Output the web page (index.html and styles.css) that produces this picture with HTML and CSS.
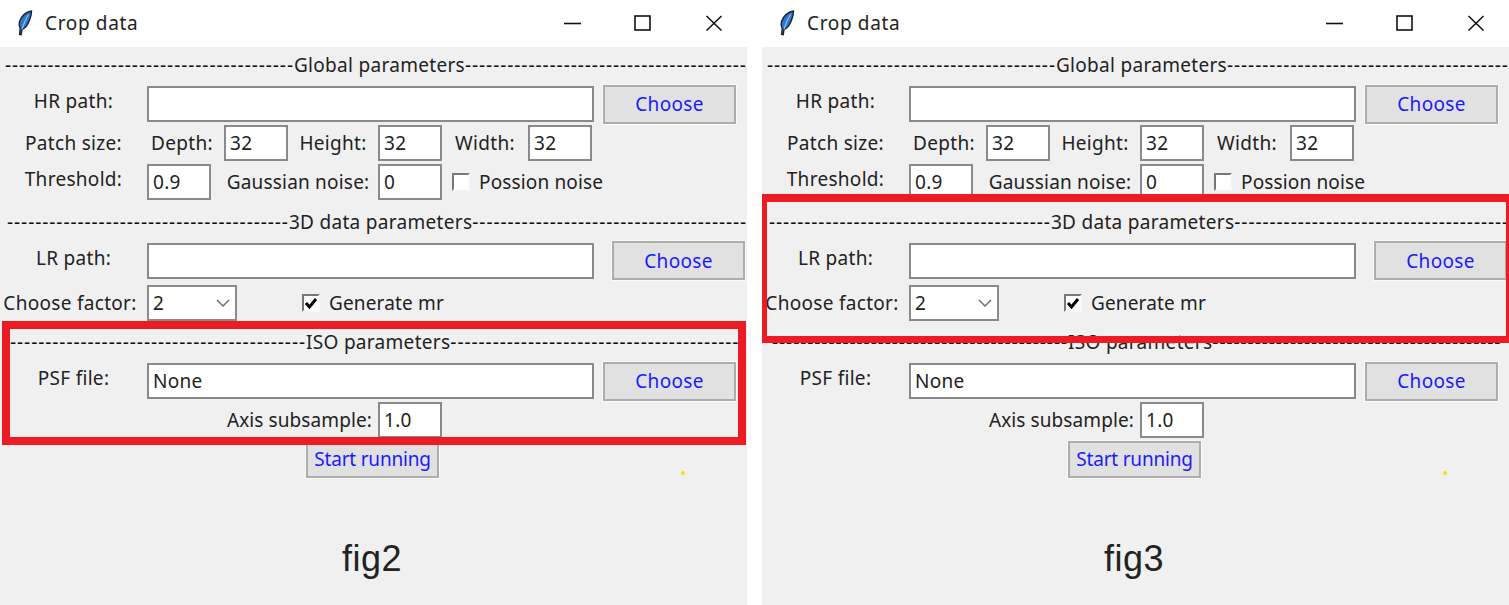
FILE: index.html
```html
<!DOCTYPE html>
<html>
  <head>
    <title>Crop data</title>
    <link rel="stylesheet" href="styles.css">
  </head>
  <body>
    <div class="desktop">
      <!-- fig2 -->
      <div class="window">
        <div class="titlebar">
          <svg class="feather" width="16" height="26" viewBox="0 0 16 26">
            <path d="M14.5 1C9.5 2 4.500 6 2.500 11.500 1.800 14 2.200 16.500 3.200 18.600L2.600 24.500 4.200 24.700 5 19.400C8.500 18 11 14.500 12.600 10 13.800 6.800 14.600 3.600 14.500 1Z" fill="#2f78d0" stroke="#1a2431" stroke-width="1.400"/>
            <path d="M11.500 4.500C9 8.500 7 13 5 19.400" fill="none" stroke="#a9cdf2" stroke-width="1"/>
          </svg>
          <span class="title-text">Crop data</span>
          <svg class="win-controls" width="159" height="16" viewBox="0 0 159 16">
            <path d="M0 8.500H17" stroke="#111" stroke-width="1.600"/>
            <rect x="71" y="1" width="15" height="14" fill="none" stroke="#111" stroke-width="1.600"/>
            <path d="M142.500 1L157.500 15.500M157.500 1L142.500 15.500" stroke="#111" stroke-width="1.500"/>
          </svg>
        </div>
        <div class="content">
          <div class="heading heading-global"><span class="dash">-----------------------------------------</span>Global parameters<span class="dash">----------------------------------------</span></div>

          <div class="row row-path">
            <div class="cell cell-label raised">HR path:</div>
            <div class="entry entry-wide"></div>
            <div class="btn btn-choose">Choose</div>
          </div>

          <div class="row row-patch">
            <div class="cell cell-label">Patch size:</div>
            <div class="cell cell-depth">Depth:</div>
            <div class="entry entry-short">32</div>
            <div class="cell cell-height">Height:</div>
            <div class="entry entry-short">32</div>
            <div class="cell cell-width">Width:</div>
            <div class="entry entry-short">32</div>
          </div>

          <div class="row row-thresh">
            <div class="cell cell-label raised">Threshold:</div>
            <div class="entry entry-short">0.9</div>
            <div class="cell cell-gauss">Gaussian noise:</div>
            <div class="entry entry-short">0</div>
            <div class="check check-possion"></div>
            <div class="check-label">Possion noise</div>
          </div>

          <div class="heading heading-3d"><span class="dash">----------------------------------------</span>3D data parameters<span class="dash">---------------------------------------</span></div>

          <div class="row row-lr">
            <div class="cell cell-label raised">LR path:</div>
            <div class="entry entry-wide"></div>
            <div class="btn btn-choose btn-lr">Choose</div>
          </div>

          <div class="row row-factor">
            <div class="cell cell-label cell-factor">Choose factor:</div>
            <div class="entry combo">2
              <svg class="chevron" width="14" height="8" viewBox="0 0 14 8"><path d="M1 1L7 7L13 1" fill="none" stroke="#707070" stroke-width="1.500"/></svg>
            </div>
            <div class="check check-mr">
              <svg width="14" height="13" viewBox="0 0 14 13"><path d="M2 6L5.500 10L12 2" fill="none" stroke="#000" stroke-width="3"/></svg>
            </div>
            <div class="check-label">Generate mr</div>
          </div>

          <div class="heading heading-iso"><span class="dash">------------------------------------------</span>ISO parameters<span class="dash">-----------------------------------------</span></div>

          <div class="row row-path row-psf">
            <div class="cell cell-label raised">PSF file:</div>
            <div class="entry entry-wide">None</div>
            <div class="btn btn-choose">Choose</div>
          </div>

          <div class="row row-axis">
            <div class="cell cell-axis">Axis subsample:</div>
            <div class="entry entry-short">1.0</div>
          </div>

          <div class="row row-start">
            <div class="btn btn-start">Start running</div>
          </div>

          <div class="caption">fig2</div>
        </div>
        <span class="dot"></span>
        <div class="highlight highlight-left"></div>
      </div>

      <!-- fig3 -->
      <div class="window">
        <div class="titlebar">
          <svg class="feather" width="16" height="26" viewBox="0 0 16 26">
            <path d="M14.5 1C9.5 2 4.500 6 2.500 11.500 1.800 14 2.200 16.500 3.200 18.600L2.600 24.500 4.200 24.700 5 19.400C8.500 18 11 14.500 12.600 10 13.800 6.800 14.600 3.600 14.500 1Z" fill="#2f78d0" stroke="#1a2431" stroke-width="1.400"/>
            <path d="M11.500 4.500C9 8.500 7 13 5 19.400" fill="none" stroke="#a9cdf2" stroke-width="1"/>
          </svg>
          <span class="title-text">Crop data</span>
          <svg class="win-controls" width="159" height="16" viewBox="0 0 159 16">
            <path d="M0 8.500H17" stroke="#111" stroke-width="1.600"/>
            <rect x="71" y="1" width="15" height="14" fill="none" stroke="#111" stroke-width="1.600"/>
            <path d="M142.500 1L157.500 15.500M157.500 1L142.500 15.500" stroke="#111" stroke-width="1.500"/>
          </svg>
        </div>
        <div class="content">
          <div class="heading heading-global"><span class="dash">-----------------------------------------</span>Global parameters<span class="dash">----------------------------------------</span></div>

          <div class="row row-path">
            <div class="cell cell-label raised">HR path:</div>
            <div class="entry entry-wide"></div>
            <div class="btn btn-choose">Choose</div>
          </div>

          <div class="row row-patch">
            <div class="cell cell-label">Patch size:</div>
            <div class="cell cell-depth">Depth:</div>
            <div class="entry entry-short">32</div>
            <div class="cell cell-height">Height:</div>
            <div class="entry entry-short">32</div>
            <div class="cell cell-width">Width:</div>
            <div class="entry entry-short">32</div>
          </div>

          <div class="row row-thresh">
            <div class="cell cell-label raised">Threshold:</div>
            <div class="entry entry-short">0.9</div>
            <div class="cell cell-gauss">Gaussian noise:</div>
            <div class="entry entry-short">0</div>
            <div class="check check-possion"></div>
            <div class="check-label">Possion noise</div>
          </div>

          <div class="heading heading-3d"><span class="dash">----------------------------------------</span>3D data parameters<span class="dash">---------------------------------------</span></div>

          <div class="row row-lr">
            <div class="cell cell-label raised">LR path:</div>
            <div class="entry entry-wide"></div>
            <div class="btn btn-choose btn-lr">Choose</div>
          </div>

          <div class="row row-factor">
            <div class="cell cell-label cell-factor">Choose factor:</div>
            <div class="entry combo">2
              <svg class="chevron" width="14" height="8" viewBox="0 0 14 8"><path d="M1 1L7 7L13 1" fill="none" stroke="#707070" stroke-width="1.500"/></svg>
            </div>
            <div class="check check-mr">
              <svg width="14" height="13" viewBox="0 0 14 13"><path d="M2 6L5.500 10L12 2" fill="none" stroke="#000" stroke-width="3"/></svg>
            </div>
            <div class="check-label">Generate mr</div>
          </div>

          <div class="heading heading-iso"><span class="dash">------------------------------------------</span>ISO parameters<span class="dash">-----------------------------------------</span></div>

          <div class="row row-path row-psf">
            <div class="cell cell-label raised">PSF file:</div>
            <div class="entry entry-wide">None</div>
            <div class="btn btn-choose">Choose</div>
          </div>

          <div class="row row-axis">
            <div class="cell cell-axis">Axis subsample:</div>
            <div class="entry entry-short">1.0</div>
          </div>

          <div class="row row-start">
            <div class="btn btn-start">Start running</div>
          </div>

          <div class="caption">fig3</div>
        </div>
        <span class="dot"></span>
        <div class="highlight highlight-right"></div>
      </div>
    </div>
  </body>
</html>
```

FILE: styles.css
```css
html,
body {
  margin: 0;
  padding: 0;
  background-color: #fff;
}

body {
  font-family: "Noto Sans", sans-serif;
  font-size: 19px;
  letter-spacing: 0.3px;
  color: #222;
}

.desktop {
  display: flex;
  gap: 15px;
  width: 1509px;
  height: 605px;
  overflow: hidden;
}

.window {
  position: relative;
  display: flex;
  flex-direction: column;
  width: 747px;
  height: 605px;
}

/* title bar */
.titlebar {
  display: flex;
  align-items: center;
  flex: 0 0 47px;
  background-color: #fff;
  padding-bottom: 1px;
  box-sizing: border-box;
}

.feather {
  margin-left: 17px;
}

.title-text {
  margin-left: 12px;
  letter-spacing: 0.65px;
  white-space: nowrap;
}

.win-controls {
  margin-left: auto;
  margin-right: 24px;
}

/* body of the window */
.content {
  flex: 1;
  background-color: #f0f0f0;
  padding-top: 8px;
}

.heading {
  display: flex;
  align-items: center;
  height: 20px;
  white-space: nowrap;
}

.heading-global {
  padding-left: 5px;
}

.heading-3d {
  margin-top: 12px;
  padding-left: 7px;
}

.heading-iso {
  margin-top: 11px;
  padding-left: 10px;
}

.dash {
  letter-spacing: 0.93px;
  color: #111;
}

.row {
  display: flex;
  align-items: center;
}

.row-path {
  height: 40px;
  margin-top: 9px;
}

.row-patch {
  height: 36px;
  margin-top: 1px;
}

.row-thresh {
  height: 36px;
  margin-top: 3px;
}

.row-lr {
  height: 39px;
  margin-top: 9px;
}

.row-factor {
  height: 36px;
  margin-top: 5px;
}

.row-axis {
  height: 36px;
  margin-top: 1px;
}

.row-start {
  height: 37px;
  margin-top: 3px;
}

.cell {
  text-align: center;
  white-space: nowrap;
  line-height: 24px;
}

.raised {
  margin-bottom: 6px;
}

.cell-label {
  width: 147px;
}

.cell-factor {
  padding-right: 7px;
  width: 140px;
}

.cell-depth {
  width: 70px;
  padding-right: 7px;
}

.cell-height {
  width: 90px;
}

.cell-width {
  width: 86px;
}

.cell-gauss {
  width: 160px;
  padding-left: 7px;
  letter-spacing: 0.2px;
}

.cell-axis {
  width: 372px;
  padding-right: 6px;
  text-align: right;
  letter-spacing: 0.1px;
}

/* tk entries */
.entry {
  box-sizing: border-box;
  height: 36px;
  line-height: 32px;
  padding-left: 4px;
  background-color: #fff;
  border: 2px solid #8a8a8a;
  white-space: nowrap;
}

.entry-wide {
  width: 447px;
}

.entry-short {
  width: 64px;
}

.combo {
  display: flex;
  align-items: center;
  justify-content: space-between;
  width: 90px;
  padding-right: 5px;
}

.btn {
  box-sizing: border-box;
  display: flex;
  align-items: center;
  justify-content: center;
  width: 133px;
  background-color: #e1e1e1;
  border: 2px solid #adadad;
  outline: 1px solid #fafafa;
  color: #1a1aff;
  white-space: nowrap;
}

.btn-choose {
  height: 39px;
  margin-left: 9px;
}

.btn-lr {
  margin-left: 18px;
}

.btn-start {
  height: 37px;
  margin-left: 306px;
  padding-bottom: 2px;
  letter-spacing: -0.2px;
}

.check {
  box-sizing: border-box;
  display: flex;
  align-items: center;
  justify-content: center;
  width: 18px;
  height: 18px;
  background-color: #fff;
  border-top: 2px solid #777;
  border-left: 2px solid #777;
  border-right: 2px solid #f8f8f8;
  border-bottom: 2px solid #f8f8f8;
}

.check-possion {
  margin-left: 10px;
}

.check-mr {
  margin-left: 65px;
}

.check-label {
  margin-left: 9px;
  letter-spacing: 0.15px;
  white-space: nowrap;
}

.caption {
  margin-top: 59px;
  height: 44px;
  line-height: 44px;
  text-align: center;
  padding-right: 3px;
  font-family: "Liberation Sans", sans-serif;
  font-size: 36px;
  letter-spacing: 0.5px;
  color: #222;
}

/* annotations drawn over the screenshot */
.dot {
  position: absolute;
  left: 681px;
  top: 471px;
  width: 4px;
  height: 4px;
  border-radius: 50%;
  background-color: #ffdd00;
}

.highlight {
  position: absolute;
  box-sizing: border-box;
  border: 8px solid #ed1c24;
}

.highlight-left {
  left: 2px;
  top: 321px;
  width: 744px;
  height: 124px;
}

.highlight-right {
  left: 0;
  top: 194px;
  width: 747px;
  height: 149px;
  border-left-width: 5px;
  border-right-width: 3px;
  border-bottom-width: 7px;
}
```
